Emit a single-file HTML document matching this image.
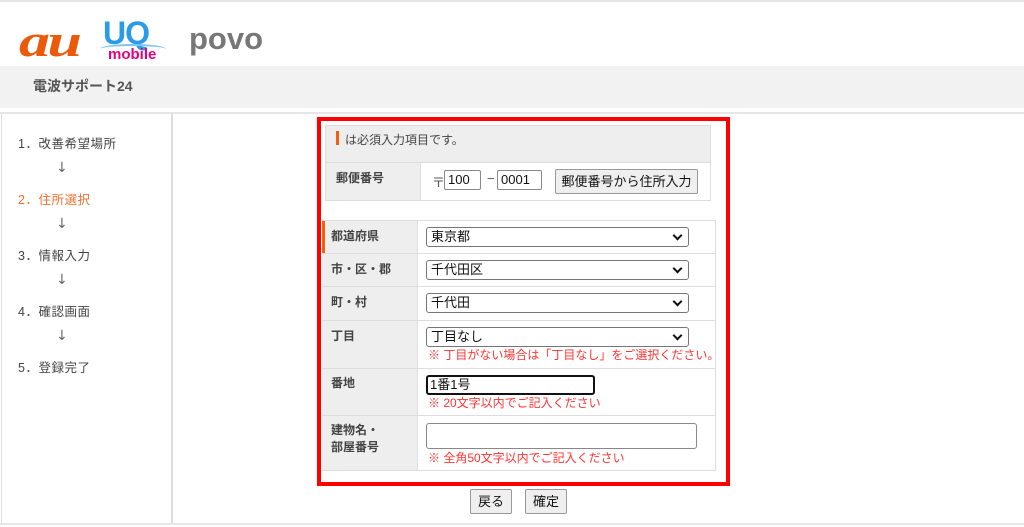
<!DOCTYPE html>
<html><head><meta charset="utf-8"><style>
*{box-sizing:border-box;margin:0;padding:0}
body{width:1024px;height:527px;background:#fff;font-family:"Liberation Sans","Noto Sans CJK JP",sans-serif;position:relative;overflow:hidden;color:#333}
.a{position:absolute}
.lbl{position:absolute;font-size:12px;font-weight:bold;color:#444}
.sel{position:absolute;height:20px;border:1px solid #767676;border-radius:3px;background:#fff;font-size:13px;padding-left:4px;line-height:18px;color:#111}
.sel:after{content:"";position:absolute;right:7px;top:4px;width:5px;height:5px;border-right:2px solid #111;border-bottom:2px solid #111;transform:rotate(45deg)}
.note{position:absolute;font-size:12px;color:#f33}
.btn{position:absolute;border:1px solid #999;border-radius:2px;background:#efefef;font-size:13px;text-align:center;color:#111}
.step{position:absolute;left:18px;font-size:12.5px;color:#444;letter-spacing:.5px}
.arr{position:absolute;left:56px;font-size:14px;color:#666;font-family:"DejaVu Sans",sans-serif}
</style></head><body>
<div class="a" style="left:0;top:0;width:1024px;height:2px;background:#e6e6e6"></div>
<div class="a" style="left:19px;top:14px;font-family:'Liberation Serif',serif;font-style:italic;font-weight:bold;font-size:46px;color:#eb5a0a;letter-spacing:-2px;transform:scaleX(1.35);transform-origin:left top">au</div>
<div class="a" style="left:103px;top:15px;font-weight:bold;font-size:32px;color:#2a9be8;letter-spacing:-1px">UQ</div>
<div class="a" style="left:100px;top:44px;width:66px;height:10px;border-top:2px solid #7fc3f0;border-radius:50% 50% 0 0"></div>
<div class="a" style="left:108px;top:46px;font-weight:bold;font-size:15px;color:#e4007f">mobile</div>
<div class="a" style="left:189px;top:21px;font-weight:bold;font-size:31px;color:#777">povo</div>
<div class="a" style="left:0;top:66px;width:1024px;height:42px;background:#f2f2f2"></div>
<div class="a" style="left:33px;top:76px;font-size:14px;font-weight:bold;color:#555">電波サポート24</div>
<div class="a" style="left:0;top:112px;width:1024px;height:2px;background:#e6e6e6"></div>
<div class="a" style="left:1px;top:114px;width:172px;height:411px;border-left:1px solid #ddd;border-right:2px solid #ddd"></div>
<div class="a" style="left:0;top:523px;width:1024px;height:2px;background:#e6e6e6"></div>
<div class="step" style="top:133px">1．改善希望場所</div>
<div class="arr" style="top:160px">↓</div>
<div class="step" style="top:189px;color:#f07030">2．住所選択</div>
<div class="arr" style="top:216px">↓</div>
<div class="step" style="top:245px">3．情報入力</div>
<div class="arr" style="top:272px">↓</div>
<div class="step" style="top:301px">4．確認画面</div>
<div class="arr" style="top:328px">↓</div>
<div class="step" style="top:357px">5．登録完了</div>

<div class="a" style="left:317px;top:117px;width:413px;height:369px;border:4px solid #f00"></div>
<div class="a" style="left:325px;top:125px;width:386px;height:76px;border:1px solid #ddd"></div>
<div class="a" style="left:326px;top:126px;width:384px;height:37px;background:#eee;border-bottom:1px solid #ddd"></div>
<div class="a" style="left:336px;top:131px;width:3px;height:14px;background:#f06010"></div>
<div class="a" style="left:345px;top:131px;font-size:12px;color:#444">は必須入力項目です。</div>
<div class="a" style="left:326px;top:163px;width:95px;height:37px;background:#eee;border-right:1px solid #ddd"></div>
<div class="lbl" style="left:336px;top:169px">郵便番号</div>
<div class="a" style="left:432px;top:172px;font-size:13px;color:#555">〒</div>
<div class="a" style="left:444px;top:170px;width:37px;height:20px;border:1px solid #888;border-radius:2px;font-size:13px;padding-left:3px;line-height:18px;color:#111">100</div>
<div class="a" style="left:487px;top:171px;font-size:13px;color:#555">−</div>
<div class="a" style="left:497px;top:170px;width:45px;height:20px;border:1px solid #888;border-radius:2px;font-size:13px;padding-left:3px;line-height:18px;color:#111">0001</div>
<div class="btn" style="left:555px;top:169px;width:143px;height:25px;line-height:23px">郵便番号から住所入力</div>
<div class="a" style="left:322px;top:220px;width:394px;height:251px;border:1px solid #ddd"></div>
<div class="a" style="left:322px;top:221px;width:96px;height:249px;background:#eee;border-right:1px solid #ddd"></div>
<div class="a" style="left:322px;top:221px;width:3px;height:32px;background:#f06010"></div>
<div class="a" style="left:322px;top:253px;width:394px;height:1px;background:#ddd"></div>
<div class="a" style="left:322px;top:286px;width:394px;height:1px;background:#ddd"></div>
<div class="a" style="left:322px;top:320px;width:394px;height:1px;background:#ddd"></div>
<div class="a" style="left:322px;top:368px;width:394px;height:1px;background:#ddd"></div>
<div class="a" style="left:322px;top:415px;width:394px;height:1px;background:#ddd"></div>
<div class="lbl" style="left:331px;top:227px">都道府県</div>
<div class="lbl" style="left:331px;top:260px">市・区・郡</div>
<div class="lbl" style="left:331px;top:293px">町・村</div>
<div class="lbl" style="left:331px;top:327px">丁目</div>
<div class="lbl" style="left:331px;top:374px">番地</div>
<div class="lbl" style="left:331px;top:422px;line-height:17px">建物名・<br>部屋番号</div>
<div class="sel" style="left:426px;top:227px;width:263px">東京都</div>
<div class="sel" style="left:426px;top:260px;width:263px">千代田区</div>
<div class="sel" style="left:426px;top:293px;width:263px">千代田</div>
<div class="sel" style="left:426px;top:327px;width:263px">丁目なし</div>
<div class="note" style="left:428px;top:346px">※ 丁目がない場合は「丁目なし」をご選択ください。</div>
<div class="a" style="left:426px;top:375px;width:169px;height:20px;border:2px solid #111;border-radius:3px;font-size:13px;line-height:16px;padding-left:2px;color:#111">1番1号</div>
<div class="note" style="left:428px;top:394px">※ 20文字以内でご記入ください</div>
<div class="a" style="left:426px;top:423px;width:271px;height:26px;border:1px solid #888;border-radius:3px"></div>
<div class="note" style="left:428px;top:449px">※ 全角50文字以内でご記入ください</div>
<div class="btn" style="left:470px;top:489px;width:42px;height:25px;line-height:23px">戻る</div>
<div class="btn" style="left:525px;top:489px;width:42px;height:25px;line-height:23px">確定</div>
</body></html>
